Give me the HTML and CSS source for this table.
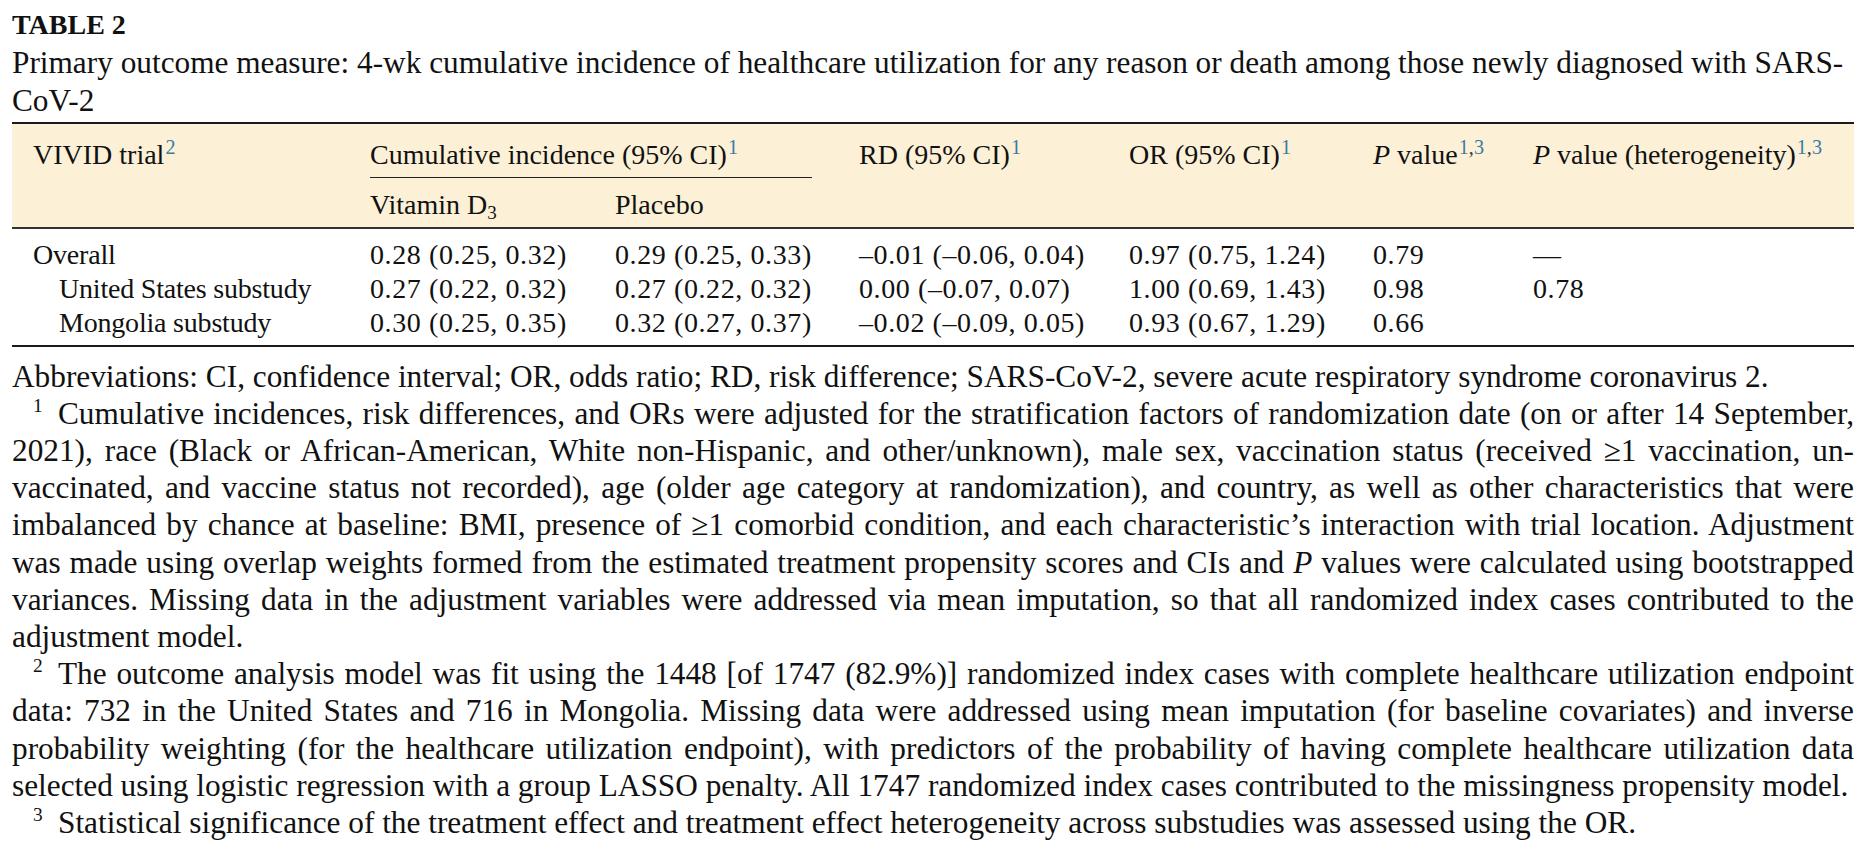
FILE: index.html
```html
<!DOCTYPE html>
<html lang="en">
<head>
<meta charset="utf-8">
<title>Table 2</title>
<link rel="stylesheet" href="styles.css">
</head>
<body>
<div class="page">
  <h2 class="label">TABLE 2</h2>
  <p class="caption">Primary outcome measure: 4-wk cumulative incidence of healthcare utilization for any reason or death among those newly diagnosed with SARS-<br>CoV-2</p>
  <table class="data">
    <colgroup>
      <col class="c1"><col class="c2"><col class="c3"><col class="c4"><col class="c5"><col class="c6"><col class="c7">
    </colgroup>
    <thead>
      <tr class="h1">
        <th>VIVID trial<sup class="ref">2</sup></th>
        <th colspan="2" class="group"><div class="spanner">Cumulative incidence (95% CI)<sup class="ref">1</sup></div></th>
        <th>RD (95% CI)<sup class="ref">1</sup></th>
        <th>OR (95% CI)<sup class="ref">1</sup></th>
        <th><i>P</i> value<sup class="ref">1<span class="comma">,</span>3</sup></th>
        <th><i>P</i> value (heterogeneity)<sup class="ref">1<span class="comma">,</span>3</sup></th>
      </tr>
      <tr class="h2">
        <th></th>
        <th>Vitamin D<sub>3</sub></th>
        <th>Placebo</th>
        <th></th>
        <th></th>
        <th></th>
        <th></th>
      </tr>
    </thead>
    <tbody>
      <tr>
        <td class="name">Overall</td>
        <td>0.28 (0.25, 0.32)</td>
        <td>0.29 (0.25, 0.33)</td>
        <td>–0.01 (–0.06, 0.04)</td>
        <td>0.97 (0.75, 1.24)</td>
        <td>0.79</td>
        <td>—</td>
      </tr>
      <tr>
        <td class="name sub">United States substudy</td>
        <td>0.27 (0.22, 0.32)</td>
        <td>0.27 (0.22, 0.32)</td>
        <td>0.00 (–0.07, 0.07)</td>
        <td>1.00 (0.69, 1.43)</td>
        <td>0.98</td>
        <td>0.78</td>
      </tr>
      <tr>
        <td class="name sub">Mongolia substudy</td>
        <td>0.30 (0.25, 0.35)</td>
        <td>0.32 (0.27, 0.37)</td>
        <td>–0.02 (–0.09, 0.05)</td>
        <td>0.93 (0.67, 1.29)</td>
        <td>0.66</td>
        <td></td>
      </tr>
    </tbody>
  </table>
  <div class="notes">
    <p class="abbr">Abbreviations: CI, confidence interval; OR, odds ratio; RD, risk difference; SARS-CoV-2, severe acute respiratory syndrome coronavirus 2.</p>
    <p class="fn">
      <span class="ln"><span class="mark">1</span>Cumulative incidences, risk differences, and ORs were adjusted for the stratification factors of randomization date (on or after 14 September,</span>
      <span class="ln">2021), race (Black or African-American, White non-Hispanic, and other/unknown), male sex, vaccination status (received ≥1 vaccination, un-</span>
      <span class="ln">vaccinated, and vaccine status not recorded), age (older age category at randomization), and country, as well as other characteristics that were</span>
      <span class="ln">imbalanced by chance at baseline: BMI, presence of ≥1 comorbid condition, and each characteristic’s interaction with trial location. Adjustment</span>
      <span class="ln">was made using overlap weights formed from the estimated treatment propensity scores and CIs and <i>P</i> values were calculated using bootstrapped</span>
      <span class="ln">variances. Missing data in the adjustment variables were addressed via mean imputation, so that all randomized index cases contributed to the</span>
      <span class="ln last">adjustment model.</span>
    </p>
    <p class="fn">
      <span class="ln"><span class="mark">2</span>The outcome analysis model was fit using the 1448 [of 1747 (82.9%)] randomized index cases with complete healthcare utilization endpoint</span>
      <span class="ln">data: 732 in the United States and 716 in Mongolia. Missing data were addressed using mean imputation (for baseline covariates) and inverse</span>
      <span class="ln">probability weighting (for the healthcare utilization endpoint), with predictors of the probability of having complete healthcare utilization data</span>
      <span class="ln last">selected using logistic regression with a group LASSO penalty. All 1747 randomized index cases contributed to the missingness propensity model.</span>
    </p>
    <p class="fn">
      <span class="ln last"><span class="mark">3</span>Statistical significance of the treatment effect and treatment effect heterogeneity across substudies was assessed using the OR.</span>
    </p>
  </div>
</div>
</body>
</html>
```

FILE: styles.css
```css
html, body {
  margin: 0;
  background: #ffffff;
}

body {
  font-family: "Liberation Serif", "Times New Roman", serif;
  color: #111111;
  font-size: 31.3px;
}

.page {
  padding: 6px 14px 0 12px;
}

.label {
  margin: 0;
  font-size: 28px;
  font-weight: 700;
  line-height: 38px;
}

.caption {
  margin: 0;
  line-height: 38px;
}

.data {
  width: 100%;
  margin-top: 2px;
  border-collapse: collapse;
  table-layout: fixed;
  border-top: 2px solid #1a1a1a;
  border-bottom: 2px solid #1a1a1a;
  font-size: 28px;
}

.c1 { width: 337px; }
.c2 { width: 245px; }
.c3 { width: 244px; }
.c4 { width: 270px; }
.c5 { width: 244px; }
.c6 { width: 160px; }
.c7 { width: auto; }

.data thead {
  background: #fcf0d6;
}

.data th {
  font-weight: 400;
  text-align: left;
  vertical-align: top;
  line-height: 34px;
  padding: 0 0 0 21px;
  white-space: nowrap;
}

.h1 th {
  padding-top: 14px;
  padding-bottom: 6.5px;
}

.h1 th.group {
  padding-bottom: 0;
  padding-right: 26px;
}

.spanner {
  padding-bottom: 5px;
  border-bottom: 1.5px solid #222222;
}

.h2 th {
  padding-top: 9px;
  padding-bottom: 5px;
  border-bottom: 2px solid #333333;
}

.data td {
  line-height: 34px;
  padding: 0 0 0 21px;
  white-space: nowrap;
  letter-spacing: 0.6px;
}

.data td.name {
  letter-spacing: -0.2px;
}

.data tbody tr:first-child td {
  padding-top: 9px;
}

.data tbody tr:last-child td {
  padding-bottom: 5px;
}

.data td.sub {
  padding-left: 47px;
}

sup.ref {
  color: #3b7ba4;
  font-size: 0.72em;
  line-height: 0;
  vertical-align: 0.5em;
  margin-left: 1px;
}

sup.ref .comma {
  color: #333333;
}

sub {
  font-size: 0.68em;
  line-height: 0;
  vertical-align: -0.25em;
}

.notes {
  margin-top: 11px;
  line-height: 37.2px;
}

.notes p {
  margin: 0;
}

.ln {
  display: block;
  text-align: justify;
  text-align-last: justify;
  white-space: nowrap;
}

.ln.last {
  text-align-last: left;
}

.mark {
  display: inline-block;
  width: 25px;
  margin-left: 21px;
  font-size: 0.62em;
  line-height: 0;
  vertical-align: 0.6em;
}
```
